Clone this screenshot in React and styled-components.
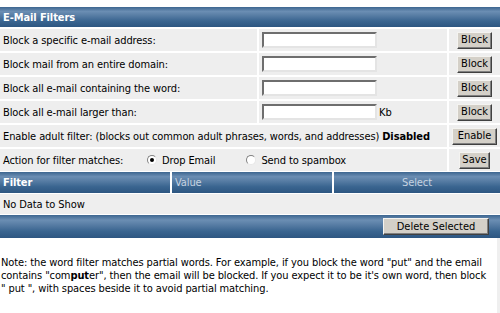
import styled, { createGlobalStyle } from "styled-components";

const Global = createGlobalStyle`
  html, body {
    margin: 0;
    padding: 0;
    background: #fff;
  }
  body {
    font-family: "DejaVu Sans Condensed", "DejaVu Sans", Tahoma, sans-serif;
    font-stretch: condensed;
    font-size: 11px;
    letter-spacing: -0.1px;
    color: #000;
  }
`;

const barGradient = `linear-gradient(
  to bottom,
  #3d6690 0%,
  #6b8eb3 22%,
  #5a7fa6 40%,
  #3a6590 70%,
  #2d5681 100%
)`;

const Page = styled.div`
  width: 500px;
  padding-top: 7px;
`;

const FilterGrid = styled.div`
  display: grid;
  grid-template-columns: 257px 188px 51px;
  gap: 2px;
`;

const TitleBar = styled.div`
  grid-column: 1 / -1;
  height: 20px;
  display: flex;
  align-items: center;
  padding-left: 3px;
  background: ${barGradient};
  color: #fff;
  font-weight: bold;
`;

const Cell = styled.div`
  height: 22px;
  display: flex;
  align-items: center;
  padding: 0 3px;
  background: #eeeeee;
  grid-column: ${(p) => (p.$span ? `span ${p.$span}` : "auto")};
  justify-content: ${(p) => (p.$center ? "center" : "flex-start")};
  white-space: nowrap;
`;

const TextInput = styled.input`
  box-sizing: border-box;
  width: 115px;
  height: 16px;
  margin: 0;
  padding: 0 2px;
  background: #fff;
  border: 2px solid;
  border-color: #6e6e6e #e4e4e4 #e4e4e4 #6e6e6e;
  font: inherit;
`;

const Unit = styled.span`
  margin-left: 2px;
`;

const Button = styled.button`
  box-sizing: border-box;
  width: ${(p) => p.$w}px;
  height: 17px;
  margin: 0;
  padding: 0;
  background: #d4d0c8;
  border: 1px solid;
  border-color: #f4f3f0 #404040 #404040 #f4f3f0;
  box-shadow: inset -1px -1px 0 #808080;
  font: inherit;
  color: #000;
  line-height: 14px;
`;

const Radio = styled.span`
  box-sizing: border-box;
  width: 10px;
  height: 10px;
  border-radius: 50%;
  background: #fff;
  border: 1px solid;
  border-color: #808080 #e8e8e8 #e8e8e8 #808080;
  display: inline-flex;
  align-items: center;
  justify-content: center;
  margin-right: 5px;
  &::after {
    content: "";
    width: 4px;
    height: 4px;
    border-radius: 50%;
    background: ${(p) => (p.$checked ? "#000" : "transparent")};
  }
`;

const ActionLabel = styled.span`
  width: 144px;
`;

const RadioOption = styled.label`
  display: inline-flex;
  align-items: center;
  margin-right: 31px;
`;

const ListGrid = styled.div`
  display: grid;
  grid-template-columns: 170px 160px 166px;
  gap: 1px 2px;
  margin-top: 1px;
`;

const HeadCell = styled.div`
  height: 21px;
  display: flex;
  align-items: center;
  padding: 0 3px;
  background: ${barGradient};
  color: ${(p) => (p.$bold ? "#fff" : "#c6d3e1")};
  font-weight: ${(p) => (p.$bold ? "bold" : "normal")};
  justify-content: ${(p) => (p.$center ? "center" : "flex-start")};
`;

const EmptyRow = styled.div`
  grid-column: 1 / -1;
  height: 20px;
  display: flex;
  align-items: center;
  padding: 0 3px;
  background: #eeeeee;
`;

const FooterBar = styled.div`
  grid-column: 1 / -1;
  height: 23px;
  display: flex;
  align-items: center;
  justify-content: flex-end;
  padding-right: 11px;
  background: ${barGradient};
`;

const Note = styled.p`
  margin: 0;
  padding: 18px 3px 20px 1px;
  width: 493px;
  line-height: 13px;
  border-right: 3px solid #efefef;
`;

const Keep = styled.span`
  white-space: nowrap;
`;

const rows = [
  "Block a specific e-mail address:",
  "Block mail from an entire domain:",
  "Block all e-mail containing the word:",
  "Block all e-mail larger than:",
];

export default function App() {
  return (
    <>
      <Global />
      <Page>
        <FilterGrid>
          <TitleBar>E-Mail Filters</TitleBar>
          {rows.map((label, i) => (
            <>
              <Cell key={label}>{label}</Cell>
              <Cell>
                <TextInput type="text" />
                {i === 3 && <Unit>Kb</Unit>}
              </Cell>
              <Cell $center>
                <Button $w={35}>Block</Button>
              </Cell>
            </>
          ))}
          <Cell $span={2}>
            Enable adult filter: (blocks out common adult phrases, words, and
            addresses)&nbsp;<b>Disabled</b>
          </Cell>
          <Cell $center>
            <Button $w={48}>Enable</Button>
          </Cell>
          <Cell $span={2}>
            <ActionLabel>Action for filter matches:</ActionLabel>
            <RadioOption>
              <Radio $checked />
              Drop Email
            </RadioOption>
            <RadioOption>
              <Radio />
              Send to spambox
            </RadioOption>
          </Cell>
          <Cell $center>
            <Button $w={31}>Save</Button>
          </Cell>
        </FilterGrid>
        <ListGrid>
          <HeadCell $bold>Filter</HeadCell>
          <HeadCell>Value</HeadCell>
          <HeadCell $center>Select</HeadCell>
          <EmptyRow>No Data to Show</EmptyRow>
          <FooterBar>
            <Button $w={106}>Delete Selected</Button>
          </FooterBar>
        </ListGrid>
        <Note>
          Note: the word filter matches partial words. For example, if you
          block the word "put" and the email contains "com<b>put</b>er", then
          the email will be blocked. If you expect it to be it's own word, then
          block <Keep>" put ",</Keep> with spaces beside it to avoid partial
          matching.
        </Note>
      </Page>
    </>
  );
}
